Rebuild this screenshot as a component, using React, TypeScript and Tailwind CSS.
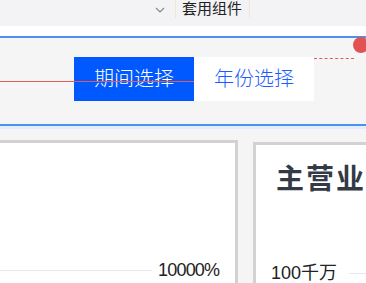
export default function App() {
  return (
    <main
      className="relative w-[366px] h-[283px] overflow-hidden bg-[#f5f5f5]"
      style={{ fontFamily: '"Liberation Sans", "Noto Sans CJK SC", sans-serif' }}
    >
      {/* toolbar */}
      <div className="h-[26px] bg-[#f3f3f5] flex items-start">
        <div className="w-[155px] shrink-0" />
        <svg width="10" height="6" viewBox="0 0 10 6" className="mt-[7px] shrink-0">
          <path d="M1 1 L5 5 L9 1" fill="none" stroke="#888" strokeWidth="1.2" />
        </svg>
        <div className="ml-[10px] w-px h-[18px] bg-[#efe6d8]" />
        <div className="ml-[6px] mt-[0px] text-[15px] leading-[18px] text-[#222]">套用组件</div>
        <div className="ml-[7px] w-px h-[18px] bg-[#efe6d8]" />
      </div>
      <div className="h-[10px] bg-white" />

      {/* tab panel */}
      <div className="relative border-t-2 border-b-2 border-[#4a92f0] h-[90px] bg-[#f5f5f5] pl-[74px] pt-[19px]">
        <div className="flex">
          <div className="w-[120px] h-[44px] bg-[#0059ff] flex items-center justify-center text-white text-[20px] font-light">
            期间选择
          </div>
          <div className="w-[120px] h-[44px] bg-white flex items-center justify-center text-[#1a5cff] text-[20px] font-light">
            年份选择
          </div>
        </div>
        <div className="absolute left-0 top-[43px] w-[194px] h-px bg-[#e25c5c]" />
        <div className="absolute left-[314px] top-[20px] w-[40px] border-t border-dashed border-[#e25c5c]" />
        <div className="absolute left-[353px] top-[-1px] w-[16px] h-[16px] rounded-full bg-[#e25252]" />
      </div>
      <div className="h-[3px] bg-[#e3ecfa]" />
      <div className="h-[11px]" />

      {/* cards */}
      <div className="flex gap-[15px] ml-[-3px]">
        <div className="w-[241px] shrink-0 h-[160px] border-[3px] border-[#d2d2d2] bg-white flex flex-col">
          <div className="flex-1" />
          <div className="flex items-center mb-[13px]">
            <div className="w-[152px] h-px bg-[#e3e8f0]" />
            <div className="ml-[6px] text-[18px] text-[#222] tracking-[-0.8px]">10000%</div>
          </div>
        </div>
        <div className="w-[200px] shrink-0 h-[160px] mt-[2px] border-[3px] border-[#d2d2d2] bg-white flex flex-col">
          <div className="pl-[20px] pt-[20px] text-[28px] font-bold leading-[30px] tracking-[2px] text-[#333a45] whitespace-nowrap">
            主营业务收入
          </div>
          <div className="flex-1" />
          <div className="flex items-center mb-[12px] pl-[15px]">
            <div className="text-[18px] text-[#222] whitespace-nowrap">100千万</div>
            <div className="ml-[12px] w-[50px] h-px bg-[#e3e8f0]" />
          </div>
        </div>
      </div>
    </main>
  );
}
